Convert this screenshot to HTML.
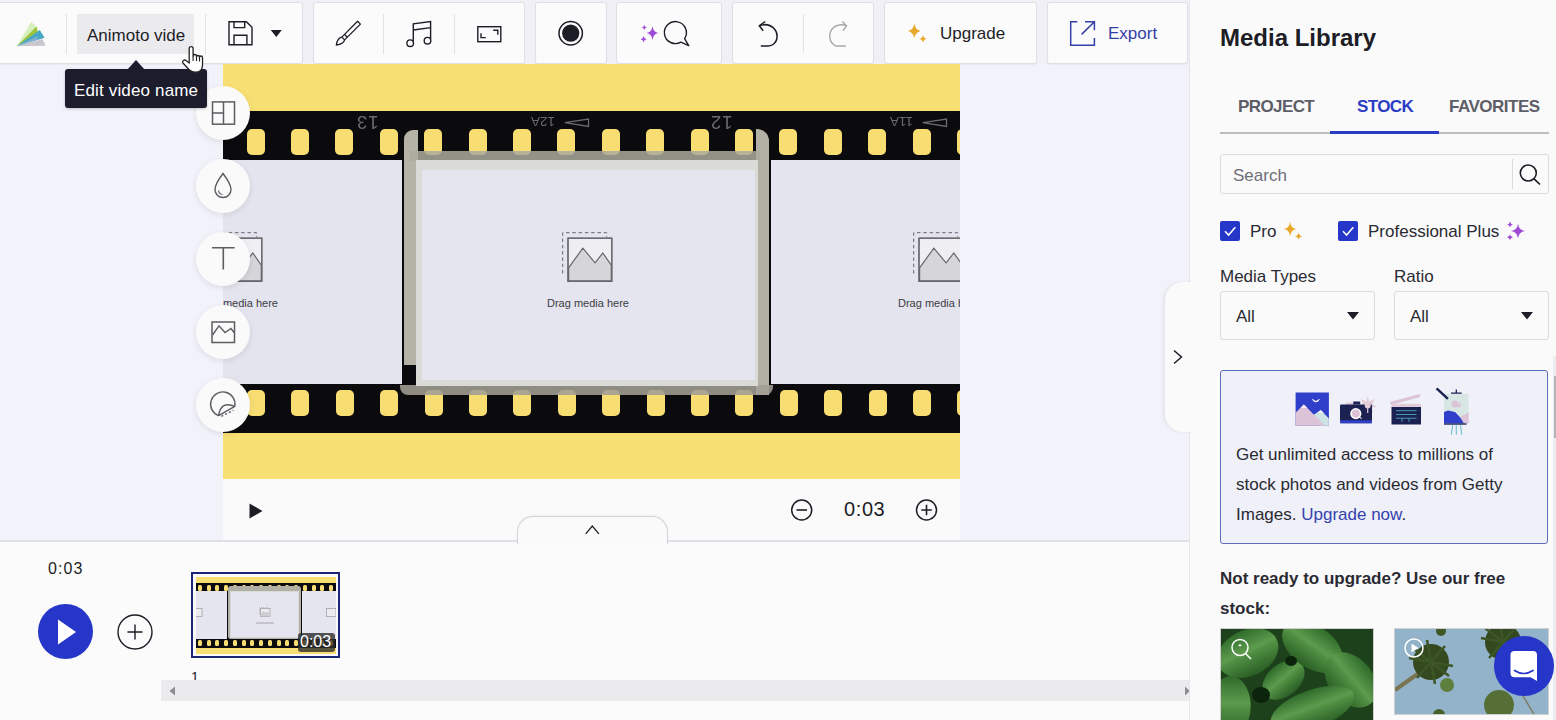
<!DOCTYPE html>
<html><head><meta charset="utf-8">
<style>
*{box-sizing:border-box;margin:0;padding:0}
html,body{width:1556px;height:720px;overflow:hidden;background:#f2f3fa;font-family:"Liberation Sans",sans-serif;color:#1d1d26}
.a{position:absolute}
.box{position:absolute;top:2px;height:62px;background:#fbfbfc;border:1px solid #dfdfe5;border-radius:3px;box-shadow:0 1px 1px rgba(0,0,0,.04)}
.sep{position:absolute;top:14px;width:1px;height:40px;background:#e2e2e6}
svg{position:absolute;overflow:visible}
.cb{position:absolute;width:54px;height:54px;border-radius:50%;background:#fafafb;box-shadow:0 2px 6px rgba(0,0,0,.09)}
.hole{position:absolute;width:18px;height:26px;border-radius:5px;background:#f8dd73}
</style></head><body>
<!-- toolbar -->
<div class="a" style="left:0;top:0;width:1190px;height:64px;background:#f0f0f6"></div>
<div class="box" style="left:-4px;width:307px"></div>
<div class="box" style="left:313px;width:212px"></div>
<div class="box" style="left:535px;width:72px"></div>
<div class="box" style="left:616px;width:106px"></div>
<div class="box" style="left:732px;width:142px"></div>
<div class="box" style="left:884px;width:153px"></div>
<div class="box" style="left:1047px;width:141px"></div>


<!-- stage -->
<div class="a" style="left:223px;top:64px;width:737px;height:477px;background:#fafafa;overflow:hidden">
 <div class="a" style="left:-223px;top:-64px;width:1200px;height:600px">
  <div class="a" style="left:223px;top:64px;width:737px;height:415px;background:#f8df74"></div>
  <div class="a" style="left:223px;top:111px;width:737px;height:322px;background:#0b0a0d"></div>
  <div class="hole" style="left:246.5px;top:129px"></div><div class="hole" style="left:290.9px;top:129px"></div><div class="hole" style="left:335.3px;top:129px"></div><div class="hole" style="left:379.7px;top:129px"></div><div class="hole" style="left:424.1px;top:129px"></div><div class="hole" style="left:468.5px;top:129px"></div><div class="hole" style="left:512.9px;top:129px"></div><div class="hole" style="left:557.3px;top:129px"></div><div class="hole" style="left:601.7px;top:129px"></div><div class="hole" style="left:646.1px;top:129px"></div><div class="hole" style="left:690.5px;top:129px"></div><div class="hole" style="left:734.9px;top:129px"></div><div class="hole" style="left:779.3px;top:129px"></div><div class="hole" style="left:823.7px;top:129px"></div><div class="hole" style="left:868.1px;top:129px"></div><div class="hole" style="left:912.5px;top:129px"></div><div class="hole" style="left:956.9px;top:129px"></div><div class="hole" style="left:247.0px;top:390px"></div><div class="hole" style="left:291.4px;top:390px"></div><div class="hole" style="left:335.8px;top:390px"></div><div class="hole" style="left:380.2px;top:390px"></div><div class="hole" style="left:424.6px;top:390px"></div><div class="hole" style="left:469.0px;top:390px"></div><div class="hole" style="left:513.4px;top:390px"></div><div class="hole" style="left:557.8px;top:390px"></div><div class="hole" style="left:602.2px;top:390px"></div><div class="hole" style="left:646.6px;top:390px"></div><div class="hole" style="left:691.0px;top:390px"></div><div class="hole" style="left:735.4px;top:390px"></div><div class="hole" style="left:779.8px;top:390px"></div><div class="hole" style="left:824.2px;top:390px"></div><div class="hole" style="left:868.6px;top:390px"></div><div class="hole" style="left:913.0px;top:390px"></div><div class="hole" style="left:957.4px;top:390px"></div>
  <div class="a" style="left:223px;top:160px;width:179px;height:224px;background:#e3e4ed"></div>
  <div class="a" style="left:771px;top:160px;width:189px;height:224px;background:#e3e4ed"></div>
  <!-- painted frame -->
  <div class="a" style="left:404px;top:130px;width:14px;height:235px;background:#b5b3a8;border-radius:9px 0 0 0;filter:blur(.5px)"></div>
  <div class="a" style="left:756px;top:129px;width:13px;height:266px;background:#b3b1a5;border-radius:0 12px 0 0;filter:blur(.5px)"></div>
  <div class="a" style="left:410px;top:151px;width:350px;height:10px;background:rgba(172,170,158,.85);filter:blur(.5px)"></div>
  <div class="a" style="left:400px;top:385px;width:373px;height:10px;background:rgba(160,158,148,.88);border-radius:0 0 8px 8px;filter:blur(.5px)"></div>
  <div class="a" style="left:416px;top:160px;width:342px;height:226px;background:#e4e5ee;border:solid #dadad6;border-width:10px 3px 6px 6px"></div>
  <!-- film numbers (upside down) -->
  <div class="a" style="left:356px;top:113px;font-size:18.5px;color:#6a6a70;letter-spacing:1px;transform:rotate(180deg);line-height:18px">13</div>
  <div class="a" style="left:531px;top:115px;font-size:13.5px;color:#6a6a70;transform:rotate(180deg);line-height:13px">12A</div>
  <svg style="left:563px;top:117px" width="30" height="12"><path d="M1.8 5.7 L25.5 2 L25.5 9.5 Z" fill="none" stroke="#6a6a70" stroke-width="1.3"/></svg>
  <div class="a" style="left:710px;top:113px;font-size:18.5px;color:#6a6a70;letter-spacing:1px;transform:rotate(180deg);line-height:18px">12</div>
  <div class="a" style="left:890px;top:115px;font-size:13.5px;color:#6a6a70;transform:rotate(180deg);line-height:13px">11A</div>
  <svg style="left:921px;top:117px" width="30" height="12"><path d="M1.8 5.7 L25.5 2 L25.5 9.5 Z" fill="none" stroke="#6a6a70" stroke-width="1.3"/></svg>
  <!-- placeholders -->
  <svg style="left:562px;top:232px" width="52" height="50" viewBox="0 0 52 50"><path d="M0.7 41.5 V0.7 H44.7 V5" fill="none" stroke="#66666c" stroke-width="1" stroke-dasharray="3.5 2.8"/><rect x="6" y="6.2" width="43.8" height="43.2" fill="#eeeef3" stroke="#66666c" stroke-width="1.2"/><path d="M6.6 35.9 L20.8 16.2 L33.1 30.8 L40.8 21 L49.3 33.1 V48.8 H6.6 Z" fill="#d6d6da" stroke="#66666c" stroke-width="1.2" stroke-linejoin="miter"/><rect x="6" y="6.2" width="43.8" height="43.2" fill="none" stroke="#66666c" stroke-width="1.2"/></svg>
  <div class="a" style="left:547px;top:297px;font-size:11px;color:#3c3c44;white-space:nowrap;line-height:13px">Drag media here</div> <svg style="left:913px;top:232px" width="52" height="50" viewBox="0 0 52 50"><path d="M0.7 41.5 V0.7 H44.7 V5" fill="none" stroke="#66666c" stroke-width="1" stroke-dasharray="3.5 2.8"/><rect x="6" y="6.2" width="43.8" height="43.2" fill="#eeeef3" stroke="#66666c" stroke-width="1.2"/><path d="M6.6 35.9 L20.8 16.2 L33.1 30.8 L40.8 21 L49.3 33.1 V48.8 H6.6 Z" fill="#d6d6da" stroke="#66666c" stroke-width="1.2" stroke-linejoin="miter"/><rect x="6" y="6.2" width="43.8" height="43.2" fill="none" stroke="#66666c" stroke-width="1.2"/></svg>
  <div class="a" style="left:898px;top:297px;font-size:11px;color:#3c3c44;white-space:nowrap;line-height:13px">Drag media here</div> <svg style="left:212px;top:232px" width="52" height="50" viewBox="0 0 52 50"><path d="M0.7 41.5 V0.7 H44.7 V5" fill="none" stroke="#66666c" stroke-width="1" stroke-dasharray="3.5 2.8"/><rect x="6" y="6.2" width="43.8" height="43.2" fill="#eeeef3" stroke="#66666c" stroke-width="1.2"/><path d="M6.6 35.9 L20.8 16.2 L33.1 30.8 L40.8 21 L49.3 33.1 V48.8 H6.6 Z" fill="#d6d6da" stroke="#66666c" stroke-width="1.2" stroke-linejoin="miter"/><rect x="6" y="6.2" width="43.8" height="43.2" fill="none" stroke="#66666c" stroke-width="1.2"/></svg>
  <div class="a" style="left:196px;top:297px;font-size:11px;color:#3c3c44;white-space:nowrap;line-height:13px">Drag media here</div>

 </div>
</div>


<!-- stage controls -->
<svg style="left:246px;top:501px" width="20" height="20"><path d="M3.5 2.5 L16.5 10 L3.5 17.5 Z" fill="#1d1d26"/></svg>
<svg style="left:789px;top:498px" width="26" height="26" viewBox="0 0 26 26"><circle cx="12.7" cy="12" r="10" fill="none" stroke="#1d1d26" stroke-width="1.5"/><path d="M7.5 12 H18" stroke="#1d1d26" stroke-width="1.6"/></svg>
<div class="a" id="t03" style="left:844px;top:498px;letter-spacing:0.6px;font-size:20px;line-height:22px;color:#1d1d26">0:03</div>
<svg style="left:914px;top:498px" width="26" height="26" viewBox="0 0 26 26"><circle cx="12.5" cy="12" r="10" fill="none" stroke="#1d1d26" stroke-width="1.5"/><path d="M7.3 12 H17.8 M12.5 6.8 V17.2" stroke="#1d1d26" stroke-width="1.6"/></svg>



<!-- right collapse tab -->
<div class="a" style="z-index:3;left:1165px;top:282px;width:32px;height:150px;background:#fafafb;border-radius:18px 0 0 18px;box-shadow:-2px 0 3px rgba(0,0,0,.06)"></div>
<svg style="left:1170px;top:347px;z-index:4" width="16" height="20"><path d="M4 3.5 L11.5 10 L4 16.5" fill="none" stroke="#1d1d26" stroke-width="1.5"/></svg>
<!-- timeline -->
<div class="a" style="left:0;top:542px;width:1189px;height:178px;background:#fbfbfb"></div>
<div class="a" style="left:0;top:540px;width:1189px;height:2px;background:#dfe0e8"></div>
<div class="a" style="left:516.5px;top:516px;width:151px;height:28px;background:#fafafa;border:1.5px solid #d3d3db;border-bottom:none;border-radius:16px 16px 0 0;box-shadow:0 -1px 2px rgba(0,0,0,.05)"></div>
<svg style="left:583px;top:521px" width="18" height="16"><path d="M2.7 12.8 L9.3 5 L15.9 12.8" fill="none" stroke="#1d1d26" stroke-width="1.3"/></svg>
<div class="a" id="tt" style="left:48px;top:559px;letter-spacing:1.1px;font-size:16px;line-height:20px;color:#1d1d26">0:03</div>
<div class="a" style="left:38px;top:604px;width:55px;height:55px;border-radius:50%;background:#2536c8"></div>
<svg style="left:38px;top:604px" width="55" height="55"><path d="M20 15.5 L38 28 L20 40.5 Z" fill="#fff"/></svg>
<svg style="left:115px;top:612px" width="40" height="40"><circle cx="20" cy="20" r="17" fill="none" stroke="#1d1d26" stroke-width="1.4"/><path d="M12.5 20 H27.5 M20 12.5 V27.5" stroke="#1d1d26" stroke-width="1.4"/></svg>
<!-- thumbnail -->
<div class="a" style="left:191px;top:572px;width:149px;height:86px;border:2px solid #1a2778;background:#fafafa;overflow:hidden">
 <div class="a" style="left:3px;top:3px;width:140px;height:77px;background:#f8df74;overflow:hidden">
  <div class="a" style="left:0;top:5.5px;width:140px;height:65px;background:#0b0a0d"></div>
  <div class="a" style="left:1.8px;top:8px;width:4px;height:6px;border-radius:1.5px;background:#f8dd73"></div><div class="a" style="left:10.6px;top:8px;width:4px;height:6px;border-radius:1.5px;background:#f8dd73"></div><div class="a" style="left:19.3px;top:8px;width:4px;height:6px;border-radius:1.5px;background:#f8dd73"></div><div class="a" style="left:28.1px;top:8px;width:4px;height:6px;border-radius:1.5px;background:#f8dd73"></div><div class="a" style="left:36.8px;top:8px;width:4px;height:6px;border-radius:1.5px;background:#f8dd73"></div><div class="a" style="left:45.5px;top:8px;width:4px;height:6px;border-radius:1.5px;background:#f8dd73"></div><div class="a" style="left:54.3px;top:8px;width:4px;height:6px;border-radius:1.5px;background:#f8dd73"></div><div class="a" style="left:63.0px;top:8px;width:4px;height:6px;border-radius:1.5px;background:#f8dd73"></div><div class="a" style="left:71.8px;top:8px;width:4px;height:6px;border-radius:1.5px;background:#f8dd73"></div><div class="a" style="left:80.5px;top:8px;width:4px;height:6px;border-radius:1.5px;background:#f8dd73"></div><div class="a" style="left:89.3px;top:8px;width:4px;height:6px;border-radius:1.5px;background:#f8dd73"></div><div class="a" style="left:98.0px;top:8px;width:4px;height:6px;border-radius:1.5px;background:#f8dd73"></div><div class="a" style="left:106.8px;top:8px;width:4px;height:6px;border-radius:1.5px;background:#f8dd73"></div><div class="a" style="left:115.5px;top:8px;width:4px;height:6px;border-radius:1.5px;background:#f8dd73"></div><div class="a" style="left:124.3px;top:8px;width:4px;height:6px;border-radius:1.5px;background:#f8dd73"></div><div class="a" style="left:133.1px;top:8px;width:4px;height:6px;border-radius:1.5px;background:#f8dd73"></div><div class="a" style="left:1.8px;top:62.5px;width:4px;height:6px;border-radius:1.5px;background:#f8dd73"></div><div class="a" style="left:10.6px;top:62.5px;width:4px;height:6px;border-radius:1.5px;background:#f8dd73"></div><div class="a" style="left:19.3px;top:62.5px;width:4px;height:6px;border-radius:1.5px;background:#f8dd73"></div><div class="a" style="left:28.1px;top:62.5px;width:4px;height:6px;border-radius:1.5px;background:#f8dd73"></div><div class="a" style="left:36.8px;top:62.5px;width:4px;height:6px;border-radius:1.5px;background:#f8dd73"></div><div class="a" style="left:45.5px;top:62.5px;width:4px;height:6px;border-radius:1.5px;background:#f8dd73"></div><div class="a" style="left:54.3px;top:62.5px;width:4px;height:6px;border-radius:1.5px;background:#f8dd73"></div><div class="a" style="left:63.0px;top:62.5px;width:4px;height:6px;border-radius:1.5px;background:#f8dd73"></div><div class="a" style="left:71.8px;top:62.5px;width:4px;height:6px;border-radius:1.5px;background:#f8dd73"></div><div class="a" style="left:80.5px;top:62.5px;width:4px;height:6px;border-radius:1.5px;background:#f8dd73"></div><div class="a" style="left:89.3px;top:62.5px;width:4px;height:6px;border-radius:1.5px;background:#f8dd73"></div><div class="a" style="left:98.0px;top:62.5px;width:4px;height:6px;border-radius:1.5px;background:#f8dd73"></div><div class="a" style="left:106.8px;top:62.5px;width:4px;height:6px;border-radius:1.5px;background:#f8dd73"></div><div class="a" style="left:115.5px;top:62.5px;width:4px;height:6px;border-radius:1.5px;background:#f8dd73"></div><div class="a" style="left:124.3px;top:62.5px;width:4px;height:6px;border-radius:1.5px;background:#f8dd73"></div><div class="a" style="left:133.1px;top:62.5px;width:4px;height:6px;border-radius:1.5px;background:#f8dd73"></div>
  <div class="a" style="left:0;top:14px;width:31px;height:48px;background:#e4e5ee"></div>
  <div class="a" style="left:106px;top:14px;width:34px;height:48px;background:#e4e5ee"></div>
  <div class="a" style="left:32px;top:9px;width:73px;height:53px;background:#b3b1a6;border-radius:3px"></div>
  <div class="a" style="left:34px;top:14px;width:69px;height:47px;background:#e4e5ee;border:1.5px solid #d9d9d5"></div>
  <svg style="left:63px;top:30px" width="12" height="10"><path d="M0.5 7 V0.5 H9" fill="none" stroke="#9a9aa0" stroke-width=".6" stroke-dasharray="1 1"/><rect x="1.5" y="1.5" width="9.5" height="8" fill="#ececf0" stroke="#9a9aa0" stroke-width=".7"/><path d="M1.7 7 L4.5 4 L7 6 L8.5 4.5 L10.8 6.5 V9.3 H1.7 Z" fill="#cfcfd3"/></svg>
  <div class="a" style="left:60px;top:45px;width:18px;height:1.5px;background:#c5c5cb"></div>
  <svg style="left:-5px;top:30px" width="12" height="10"><rect x="1.5" y="1.5" width="9.5" height="8" fill="#ececf0" stroke="#9a9aa0" stroke-width=".7"/></svg>
  <svg style="left:129px;top:30px" width="12" height="10"><rect x="1.5" y="1.5" width="9.5" height="8" fill="#ececf0" stroke="#9a9aa0" stroke-width=".7"/></svg>
 </div>
 <div class="a" style="left:105px;top:58.5px;width:37px;height:19px;background:rgba(45,45,45,.8);border-radius:3px"></div>
 <div class="a" style="left:107px;top:58px;font-size:16px;line-height:19px;color:#fff">0:03</div>
</div>
<div class="a" style="left:191px;top:669px;font-size:14px;line-height:16px;color:#1d1d26">1</div>
<div class="a" style="left:161px;top:680px;width:1028px;height:21px;background:#ebebed"></div>
<svg style="left:165px;top:683px" width="14" height="16"><path d="M10 3.5 L4.5 8 L10 12.5 Z" fill="#8e8e92"/></svg>
<svg style="left:1182px;top:683px" width="10" height="16"><path d="M3 3.5 L8 8 L3 12.5 Z" fill="#8e8e92"/></svg>

<!-- toolbar content -->
<svg style="left:0;top:0" width="60" height="60">
 <path d="M31.3 21.7 L16.7 46.3 L37 27.5 Z" fill="#d6efbd"/>
 <path d="M36.5 26.5 L16.7 46.3 L38.5 34.5 Z" fill="#9dc33b"/>
 <path d="M39.8 30 L16.7 46.3 L44.6 37.8 Z" fill="#49a7c6"/>
 <path d="M38 36 L16.7 46.3 L37 40 Z" fill="#7fb0cf"/>
 <path d="M16.7 46.3 L42.5 39 L45.6 45.8 Z" fill="#c9c6ce"/>
</svg>
<div class="sep" style="left:66px"></div>
<div class="a" style="left:77px;top:14px;width:117px;height:40px;background:#ebebee"><div class="a" style="left:0;top:0;width:108px;height:40px;overflow:hidden">
 <div class="a" style="left:10px;top:12px;font-size:17px;line-height:20px;color:#1d1d26;white-space:nowrap">Animoto video</div>
</div></div>
<div class="sep" style="left:205px"></div>
<svg style="left:226px;top:19px" width="30" height="30" viewBox="0 0 30 30">
 <path d="M3 2.7 H20.4 L26 8.2 V25.7 H3 Z" fill="none" stroke="#1d1d26" stroke-width="1.4" stroke-linejoin="miter"/>
 <path d="M8 2.7 V8.6 H18.7 V2.7" fill="none" stroke="#1d1d26" stroke-width="1.4"/>
 <path d="M8 25.7 V16.3 H20.9 V25.7" fill="none" stroke="#1d1d26" stroke-width="1.4"/>
</svg>
<svg style="left:270px;top:28px" width="14" height="10"><path d="M0.8 2 H11.8 L6.3 8.9 Z" fill="#1d1d26"/></svg>
<!-- brush -->
<svg style="left:334px;top:19px" width="30" height="30" viewBox="0 0 30 30">
 <path d="M23.6 2.3 L26.4 5.1 L10.6 20.9 L7.8 18.1 Z" fill="none" stroke="#1d1d26" stroke-width="1.3" stroke-linejoin="round"/>
 <path d="M10.5 15.4 L13.3 18.2" stroke="#1d1d26" stroke-width="1.3"/>
 <path d="M7.8 18.1 C4.8 18.6 3 21.5 2.3 26 C6.8 25.5 9.9 23.8 10.6 20.9" fill="none" stroke="#1d1d26" stroke-width="1.3" stroke-linejoin="round"/>
</svg>
<div class="sep" style="left:383px"></div>
<!-- music -->
<svg style="left:404px;top:19px" width="30" height="30" viewBox="0 0 30 30">
 <path d="M9.3 22 V4.9 L26.6 2.6 V20" fill="none" stroke="#1d1d26" stroke-width="1.4"/>
 <path d="M9.3 11 L26.6 8.6" fill="none" stroke="#1d1d26" stroke-width="1.4"/>
 <circle cx="6.2" cy="24.2" r="3.3" fill="none" stroke="#1d1d26" stroke-width="1.4"/>
 <circle cx="23.5" cy="21.7" r="3.3" fill="none" stroke="#1d1d26" stroke-width="1.4"/>
</svg>
<div class="sep" style="left:454px"></div>
<!-- resize -->
<svg style="left:475px;top:24px" width="30" height="20" viewBox="0 0 30 20">
 <rect x="2.8" y="2.7" width="23" height="15" fill="none" stroke="#1d1d26" stroke-width="1.4"/>
 <path d="M6 9.3 V13.6 H10.8" fill="none" stroke="#1d1d26" stroke-width="1.4"/>
 <path d="M18.2 6.3 H22.8 V10.7" fill="none" stroke="#1d1d26" stroke-width="1.4"/>
</svg>
<!-- record -->
<svg style="left:556px;top:19px" width="30" height="30" viewBox="0 0 30 30">
 <circle cx="14.7" cy="14.2" r="11.7" fill="none" stroke="#1d1d26" stroke-width="1.5"/>
 <circle cx="14.7" cy="14.2" r="8.6" fill="#1d1d26"/>
</svg>
<!-- ai search -->
<svg style="left:638px;top:19px" width="56" height="30" viewBox="0 0 56 30">
 <path d="M14.5 7.1 Q15.21 13.26 20.4 14.1 Q15.21 14.94 14.5 21.1 Q13.79 14.94 8.6 14.1 Q13.79 13.26 14.5 7.1 Z" fill="#a04ad8"/><path d="M6.3 5.7 Q6.61 8.16 8.9 8.5 Q6.61 8.84 6.3 11.3 Q5.99 8.84 3.6999999999999997 8.5 Q5.99 8.16 6.3 5.7 Z" fill="#a04ad8"/><path d="M5.6 17.1 Q5.96 19.92 8.6 20.3 Q5.96 20.68 5.6 23.5 Q5.24 20.68 2.5999999999999996 20.3 Q5.24 19.92 5.6 17.1 Z" fill="#a04ad8"/>
 <path d="M42.9 23.1 A11 11 0 1 1 46.6 19.6 L50.7 26.7 Z" fill="none" stroke="#1d1d26" stroke-width="1.4" stroke-linejoin="round"/>
</svg>
<!-- undo / redo -->
<svg style="left:756px;top:19px" width="26" height="30" viewBox="0 0 26 30">
 <path d="M3.3 6.8 C8 5 14 5.5 18 9.5 C22.5 14 22 22 17 25.5 C15.5 26.6 13.5 27 11.5 27 H4.8" fill="none" stroke="#1d1d26" stroke-width="1.5"/>
 <path d="M9.2 2.5 L3.3 6.8 L7.2 11.8" fill="none" stroke="#1d1d26" stroke-width="1.5"/>
</svg>
<div class="sep" style="left:803px;top:14px;height:39px"></div>
<svg style="left:826px;top:19px" width="26" height="30" viewBox="0 0 26 30">
 <path d="M20.6 6.8 C16 5 10 5.5 6.5 9.5 C2.5 14 3 22 7.5 25.5 C8.5 26.5 9.5 27 10.5 27 H19.8" fill="none" stroke="#a9a9ad" stroke-width="1.4"/>
 <path d="M16.4 2.5 L20.6 6.8 L17.2 11.5" fill="none" stroke="#a9a9ad" stroke-width="1.4"/>
</svg>
<!-- upgrade -->
<svg style="left:906px;top:22px" width="24" height="24" viewBox="0 0 24 24"><path d="M8.3 1.4000000000000004 Q9.25 7.78 14.600000000000001 8.9 Q9.25 10.03 8.3 16.4 Q7.36 10.03 2.000000000000001 8.9 Q7.36 7.78 8.3 1.4000000000000004 Z" fill="#e8a92a"/><path d="M17 12.9 Q17.60 16.21 21 16.8 Q17.60 17.39 17 20.7 Q16.40 17.39 13 16.8 Q16.40 16.21 17 12.9 Z" fill="#e8a92a"/></svg>
<div class="a" style="left:940px;top:24px;font-size:17px;line-height:20px;color:#1d1d26">Upgrade</div>
<!-- export -->
<svg style="left:1068px;top:19px" width="30" height="30" viewBox="0 0 30 30">
 <path d="M9.3 2.7 H2.7 V26.2 H26.4 V19" fill="none" stroke="#3440a6" stroke-width="1.5"/>
 <path d="M17 2.7 H26.4 V11.2 M13.6 15.4 L26.4 2.7" fill="none" stroke="#3440a6" stroke-width="1.5"/>
</svg>
<div class="a" style="left:1108px;top:24px;font-size:17px;line-height:20px;color:#3440a6">Export</div>

<!-- tooltip -->
<div class="a" style="z-index:5;left:65px;top:69px;width:142px;height:39px;background:#1c1c2c;border-radius:3px;box-shadow:0 1px 3px rgba(0,0,0,.2)"></div>
<svg style="left:124px;top:59px;z-index:5" width="24" height="12"><path d="M3 11 L12 1 L21 11 Z" fill="#1c1c2c"/></svg>
<div class="a" style="z-index:5;left:74px;top:81px;letter-spacing:0.15px;font-size:17px;line-height:20px;color:#fff;white-space:nowrap">Edit video name</div>
<!-- cursor hand -->
<svg style="left:178px;top:42px;z-index:6" width="32" height="34" viewBox="0 0 32 34">
 <path d="M11.2 17 V6.5 C11.2 4 15.1 4 15.1 6.5 V14 C15.1 12 18.5 12 18.5 14 V15 C18.5 13 21.5 13 21.5 15 V15.5 C21.5 13.5 24.5 13.5 24.5 15.5 V23 C24.5 27.5 22 30.2 17.5 30.2 C13.5 30.2 11.5 28.5 9.5 26 L5 21 C3.8 19.5 6 17 8 18.5 L11.2 21 Z" fill="#fff" stroke="#222" stroke-width="1.3" stroke-linejoin="round"/>
 <path d="M15.1 14 V19 M18.5 15 V19 M21.5 15.5 V19.5" stroke="#222" stroke-width="1.1"/>
</svg>

<!-- side buttons -->
<div class="cb" style="left:196px;top:86px"></div>
<div class="cb" style="left:196px;top:159px"></div>
<div class="cb" style="left:196px;top:232px"></div>
<div class="cb" style="left:196px;top:305px"></div>
<div class="cb" style="left:196px;top:378px"></div>
<svg style="left:210px;top:100px" width="28" height="28" viewBox="0 0 28 28">
 <rect x="2.5" y="1.9" width="22" height="22.3" fill="none" stroke="#5c5c62" stroke-width="1.5"/>
 <path d="M13.5 2 V24 M2.5 13 H13.5" stroke="#5c5c62" stroke-width="1.5"/>
</svg>
<svg style="left:212px;top:171px" width="22" height="30" viewBox="0 0 22 30">
 <path d="M11 2.5 C11 2.5 3 13 3 18.5 A8 8 0 0 0 19 18.5 C19 13 11 2.5 11 2.5 Z" fill="none" stroke="#5c5c62" stroke-width="1.4"/>
 <path d="M6.5 19.5 A4.5 4.5 0 0 0 10.5 23.5" fill="none" stroke="#5c5c62" stroke-width="1.2"/>
</svg>
<svg style="left:210px;top:245px" width="28" height="28" viewBox="0 0 28 28">
 <path d="M2 2.8 H24.6 M13.3 2.8 V24.6" stroke="#5c5c62" stroke-width="1.6"/>
</svg>
<svg style="left:209px;top:319px" width="28" height="26" viewBox="0 0 28 26">
 <rect x="3" y="3" width="22.5" height="20.5" fill="none" stroke="#5c5c62" stroke-width="1.5"/>
 <path d="M3.5 16 L10 6.8 L16 13.5 L22 9.5 L25 13.5" fill="none" stroke="#5c5c62" stroke-width="1.4"/>
</svg>
<svg style="left:208px;top:390px" width="30" height="30" viewBox="0 0 30 30">
 <path d="M10.6 25.6 A12.2 12.2 0 1 1 26.8 16.3 L10.6 25.6 Q13 10.5 26.8 16.3" fill="none" stroke="#5c5c62" stroke-width="1.4" stroke-linejoin="round"/>
 <path d="M13.4 26.3 L25.5 20.3" fill="none" stroke="#5c5c62" stroke-width="1.3" stroke-dasharray="2 2.2"/>
</svg>


<div id="timeline"></div>

<!-- right panel -->
<div class="a" style="left:1189px;top:0;width:367px;height:720px;background:#fafafb;border-left:1px solid #e4e4e9"></div>
<div class="a" style="left:1553px;top:356px;width:3px;height:364px;background:#ededf0"></div>
<div class="a" style="left:1554px;top:376px;width:2px;height:62px;background:#b4b4b8"></div>
<div class="a" id="ml" style="left:1220px;top:24px;font-size:24px;line-height:28px;font-weight:bold;color:#1d1d26;white-space:nowrap">Media Library</div>
<div class="a" id="t1" style="left:1238px;top:97px;letter-spacing:-0.6px;font-size:17px;line-height:20px;font-weight:bold;color:#5d5e67">PROJECT</div>
<div class="a" id="t2" style="left:1357px;top:97px;letter-spacing:-0.6px;font-size:17px;line-height:20px;font-weight:bold;color:#2a3cc4">STOCK</div>
<div class="a" id="t3" style="left:1449px;top:97px;letter-spacing:-0.5px;font-size:17px;line-height:20px;font-weight:bold;color:#5d5e67">FAVORITES</div>
<div class="a" style="left:1220px;top:132px;width:329px;height:2px;background:#bdbdc1"></div>
<div class="a" style="left:1330px;top:131px;width:109px;height:3px;background:#2a3cc4"></div>
<!-- search -->
<div class="a" style="left:1220px;top:154px;width:329px;height:40px;border:1px solid #dadadf;border-radius:3px;background:#fafafb"></div>
<div class="a" style="left:1512px;top:159px;width:1px;height:30px;background:#dadadf"></div>
<div class="a" id="srch" style="left:1233px;top:166px;font-size:17px;line-height:20px;color:#6e6e77">Search</div>
<svg style="left:1517px;top:162px" width="26" height="26" viewBox="0 0 26 26">
 <circle cx="11.3" cy="11" r="8" fill="none" stroke="#1d1d26" stroke-width="1.6"/>
 <path d="M17 16.8 L23 22.5" stroke="#1d1d26" stroke-width="1.7"/>
</svg>
<!-- checkboxes -->
<div class="a" style="left:1220px;top:221px;width:20px;height:20px;background:#2536c8;border-radius:2px"></div>
<svg style="left:1220px;top:221px" width="20" height="20"><path d="M5 10.3 L8.6 14 L15.3 6.2" fill="none" stroke="#fff" stroke-width="1.6"/></svg>
<div class="a" id="pro" style="left:1250px;top:222px;font-size:17px;line-height:20px;color:#2a2a32">Pro</div>
<svg style="left:1282px;top:221px" width="24" height="24" viewBox="0 0 24 24"><path d="M8.1 0.7999999999999998 Q8.84 7.14 14.3 8 Q8.84 8.86 8.1 15.2 Q7.36 8.86 1.8999999999999995 8 Q7.36 7.14 8.1 0.7999999999999998 Z" fill="#e8a92a"/><path d="M16.6 11.5 Q17.06 14.84 20.400000000000002 15.3 Q17.06 15.76 16.6 19.1 Q16.14 15.76 12.8 15.3 Q16.14 14.84 16.6 11.5 Z" fill="#e8a92a"/></svg>
<div class="a" style="left:1338px;top:221px;width:20px;height:20px;background:#2536c8;border-radius:2px"></div>
<svg style="left:1338px;top:221px" width="20" height="20"><path d="M5 10.3 L8.6 14 L15.3 6.2" fill="none" stroke="#fff" stroke-width="1.6"/></svg>
<div class="a" id="pp" style="left:1368px;top:222px;font-size:17px;line-height:20px;color:#2a2a32;white-space:nowrap">Professional Plus</div>
<svg style="left:1505px;top:221px" width="24" height="24" viewBox="0 0 24 24"><path d="M13 2.8 Q13.84 9.14 20 10 Q13.84 10.86 13 17.2 Q12.16 10.86 6 10 Q12.16 9.14 13 2.8 Z" fill="#a04ad8"/><path d="M5 0.6000000000000001 Q5.36 3.24 8 3.6 Q5.36 3.96 5 6.6 Q4.64 3.96 2 3.6 Q4.64 3.24 5 0.6000000000000001 Z" fill="#a04ad8"/><path d="M5 13.2 Q5.36 15.84 8 16.2 Q5.36 16.56 5 19.2 Q4.64 16.56 2 16.2 Q4.64 15.84 5 13.2 Z" fill="#a04ad8"/></svg>
<!-- dropdowns -->
<div class="a" id="mt" style="left:1220px;top:267px;font-size:17px;line-height:20px;color:#2a2a32;white-space:nowrap">Media Types</div>
<div class="a" id="ra" style="left:1394px;top:267px;font-size:17px;line-height:20px;color:#2a2a32">Ratio</div>
<div class="a" style="left:1220px;top:291px;width:155px;height:49px;border:1px solid #dadadf;border-radius:3px;background:#fafafb"></div>
<div class="a" style="left:1394px;top:291px;width:155px;height:49px;border:1px solid #dadadf;border-radius:3px;background:#fafafb"></div>
<div class="a" style="left:1236px;top:307px;font-size:17px;line-height:20px;color:#2a2a32">All</div>
<div class="a" style="left:1410px;top:307px;font-size:17px;line-height:20px;color:#2a2a32">All</div>
<svg style="left:1346px;top:311px" width="14" height="10"><path d="M1 1 H13 L7 8.5 Z" fill="#1d1d26"/></svg>
<svg style="left:1520px;top:311px" width="14" height="10"><path d="M1 1 H13 L7 8.5 Z" fill="#1d1d26"/></svg>
<!-- promo -->
<div class="a" style="left:1220px;top:370px;width:328px;height:174px;border:1px solid #5b6db6;border-radius:3px;background:#eff0f8"></div>
<svg style="left:1290px;top:382px" width="190" height="56" viewBox="0 0 190 56">
 <rect x="5.6" y="10.5" width="33.3" height="33.2" fill="#2f3fc9"/>
 <path d="M22 34 L30.7 28 L38.9 36.5 V43.7 H30 Z" fill="#cfe2e4"/>
 <path d="M5.6 30.8 L13.8 22.4 L35 43.7 H5.6 Z" fill="#dcc3d8"/>
 <path d="M10.6 26 L13.8 22.4 L17.5 26 Z" fill="#f2eef4"/>
 <path d="M27.4 31 L30.7 28 L34 31.3 Z" fill="#f2eef4"/>
 <path d="M22.6 17.2 A3.4 3.4 0 0 0 29.2 17.2 A3.4 2.6 0 0 1 22.6 17.2 Z" fill="#fff" stroke="#fff" stroke-width="0.8"/>
 <!-- camera -->
 <path d="M77.7 14 L79.2 19.5 L84.5 17 L82.2 22.4 L86.5 24.5 L81.5 26 L83.5 31 L77.7 28.5 L72 31 L74 26 L69 24.5 L73.2 22.4 L71 17 L76.2 19.5 Z" fill="#e2ccd9"/>
 <rect x="56" y="20.5" width="10" height="2.5" fill="#e2ccd9"/>
 <rect x="50" y="22.4" width="32" height="18.8" rx="1" fill="#1b2151"/>
 <rect x="50" y="38.3" width="32" height="2.9" fill="#2f3fc9"/>
 <rect x="63.3" y="19.5" width="6.9" height="3" fill="#1b2151"/>
 <circle cx="77.7" cy="23.5" r="3" fill="#e2ccd9"/>
 <path d="M77.7 26 V31" stroke="#e2ccd9" stroke-width="1.2"/>
 <circle cx="65.8" cy="31.6" r="5.6" fill="#fff"/>
 <circle cx="65.8" cy="31.6" r="4.1" fill="#dcc3d8"/>
 <path d="M69.5 34.5 L71.5 37" stroke="#fff" stroke-width="1"/>
 <!-- clapper -->
 <path d="M100 20 L129.5 12 L130.3 15 L100.8 23 Z" fill="#dcc3d8"/>
 <rect x="101.5" y="21.8" width="29.5" height="3.4" fill="#e2ccd9"/>
 <rect x="101.5" y="25" width="29.5" height="17.5" fill="#1b2151"/>
 <path d="M106 28.7 H126.5 M106 32.5 H126.5 M106 36.2 H126.5 M112 36.2 V40 M119 36.2 V40" stroke="#4aa8b8" stroke-width="0.9"/>
 <!-- easel -->
 <rect x="154" y="11.9" width="24.6" height="29.5" fill="#d8e6e4"/>
 <path d="M161 11.2 H171.7 M166.3 7.5 V10.6" stroke="#1b2151" stroke-width="1.3"/>
 <circle cx="165" cy="22" r="3.5" fill="#dcc3d8"/>
 <path d="M170 20 Q172 24 169 26 L167 24 Z" fill="#dcc3d8"/>
 <path d="M154 30 L158 28.5 L165 30 L176 41.4 H154 Z" fill="#2f3fc9"/>
 <path d="M170 35 L178.6 30.5 V41.4 H174 Z" fill="#dcc3d8"/>
 <path d="M146.6 6.3 L157.9 16.9" stroke="#1b2151" stroke-width="2.4"/>
 <rect x="154" y="41.4" width="22.5" height="1.3" fill="#1b2151"/>
 <path d="M162.7 43.2 L161.4 52.6 M166.3 43.2 V52.6 M170.5 43.2 L171.8 52.6" stroke="#6cc0cf" stroke-width="1.1"/>
</svg>
<div class="a" id="promo" style="left:1236px;top:440px;width:300px;font-size:17px;line-height:30px;color:#2a2a32">Get unlimited access to millions of<br>stock photos and videos from Getty<br>Images. <span style="color:#3443ae">Upgrade now</span>.</div>
<div class="a" id="nr" style="left:1220px;top:564px;width:330px;font-size:17px;line-height:30px;font-weight:bold;color:#2a2a32">Not ready to upgrade? Use our free<br>stock:</div>
<!-- images -->
<div class="a" style="left:1220px;top:628px;width:154px;height:92px;border:1.5px solid #cfcfd2;border-bottom:none;overflow:hidden;background:#1d421b">
 <svg style="left:0;top:0" width="154" height="92" viewBox="0 0 154 92">
  <defs>
   <linearGradient id="lf" x1="0" y1="0" x2="0" y2="1"><stop offset="0" stop-color="#2f6a2a"/><stop offset=".45" stop-color="#5d9c4e"/><stop offset=".55" stop-color="#4f8e42"/><stop offset="1" stop-color="#2a5e25"/></linearGradient>
  </defs>
  <ellipse cx="9.7" cy="77" rx="20" ry="30" fill="url(#lf)"/>
  <ellipse cx="26.8" cy="24" rx="32" ry="23" transform="rotate(-25 26.8 24)" fill="url(#lf)"/>
  <ellipse cx="62.5" cy="51" rx="24" ry="16" transform="rotate(-40 62.5 51)" fill="url(#lf)"/>
  <ellipse cx="91.5" cy="18" rx="34" ry="21" transform="rotate(35 91.5 18)" fill="url(#lf)"/>
  <ellipse cx="129.7" cy="51" rx="31" ry="22" transform="rotate(50 129.7 51)" fill="url(#lf)"/>
  <ellipse cx="91.5" cy="80" rx="44" ry="19" transform="rotate(-20 91.5 80)" fill="url(#lf)"/>
  <ellipse cx="40" cy="66" rx="9" ry="8" fill="#0c240c"/>
  <ellipse cx="70" cy="32" rx="6" ry="5" fill="#0c240c"/>
 </svg>
 <svg style="left:8px;top:8px" width="30" height="30"><circle cx="11" cy="10.5" r="8" fill="none" stroke="#fff" stroke-width="1.5"/><path d="M16.5 16.5 L22 22" stroke="#fff" stroke-width="1.5"/><path d="M11 7 V9.5 M9.5 8.3 H12.5" stroke="#fff" stroke-width="1"/></svg>
</div>
<div class="a" style="left:1394px;top:628px;width:155px;height:87px;border:1.5px solid #cfcfd2;overflow:hidden;background:#92b3c9">
 <svg style="left:0;top:0" width="155" height="87" viewBox="0 0 155 87">
  <path d="M0 61 L38 34" stroke="#7a7550" stroke-width="4"/>
  <path d="M118 50 L140 87" stroke="#7f7e66" stroke-width="1.5"/>
  <g fill="#34491f">
   <circle cx="36" cy="33" r="18"/>
   <circle cx="108" cy="13" r="18"/>
  </g>
  <g fill="none" stroke="#3d5626" stroke-width="2.5">
   <path d="M36 33 m-22 -4 l44 8 M36 33 m-18 -14 l36 28 M36 33 m-4 -22 l8 44 M36 33 m14 -16 l-28 32"/>
   <path d="M108 13 m-22 -4 l44 8 M108 13 m-18 -14 l36 28 M108 13 m-4 -22 l8 44 M108 13 m14 -16 l-28 32"/>
  </g>
  <circle cx="52" cy="56" r="7" fill="#5f7f3e"/>
  <circle cx="104" cy="76" r="15" fill="#566f36"/>
  <circle cx="46" cy="2" r="5" fill="#3e5826"/>
  <circle cx="44" cy="86" r="6" fill="#46602c"/>
 </svg>
 <svg style="left:8px;top:8px" width="24" height="24"><circle cx="11" cy="11" r="9" fill="none" stroke="#fff" stroke-width="1.5"/><path d="M8.5 6.5 L15.5 11 L8.5 15.5 Z" fill="#fff"/></svg>
</div>
<!-- chat -->
<div class="a" style="left:1494px;top:636px;width:59.5px;height:59.5px;border-radius:50%;background:#2536c8"></div>
<svg style="left:1508px;top:651px" width="32" height="32" viewBox="0 0 32 32">
 <path d="M2.5 4 Q2.5 0 6.5 0 H25 Q29 0 29 4 V30 L22.5 26.3 H6.5 Q2.5 26.3 2.5 22.3 Z" fill="#fff"/>
 <path d="M6.5 19.5 Q15.7 25.5 25 19.5" fill="none" stroke="#2536c8" stroke-width="1.7" stroke-linecap="round"/>
</svg>
</body></html>
